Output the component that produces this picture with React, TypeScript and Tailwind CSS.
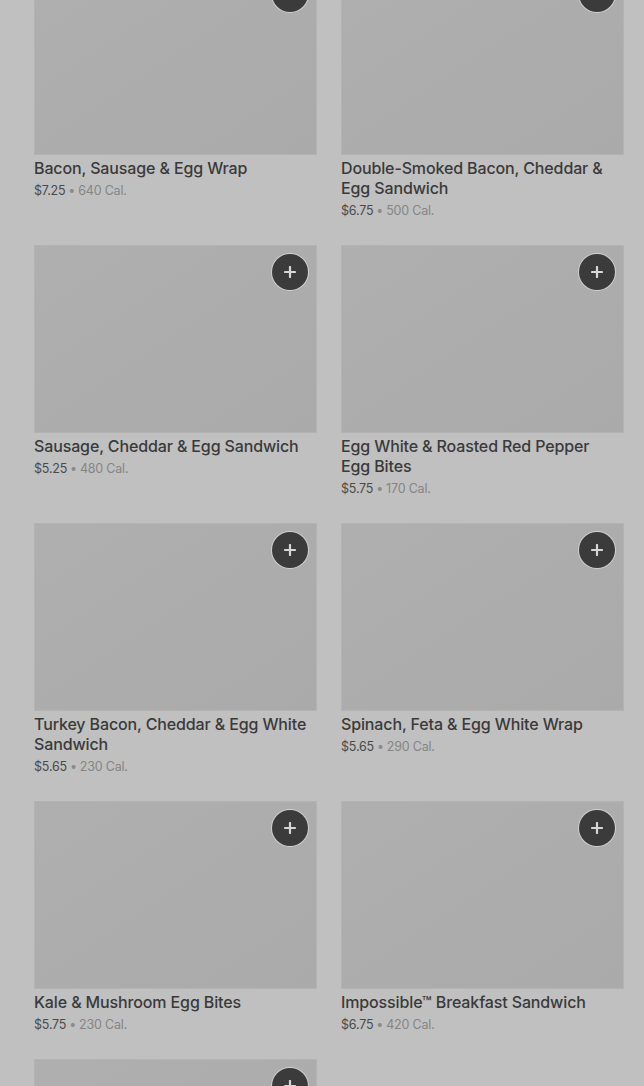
import React from "react";

type Item = { name: string; price: string; cal: string };

const items: Item[] = [
  { name: "Bacon, Sausage & Egg Wrap", price: "$7.25", cal: "640 Cal." },
  { name: "Double-Smoked Bacon, Cheddar & Egg Sandwich", price: "$6.75", cal: "500 Cal." },
  { name: "Sausage, Cheddar & Egg Sandwich", price: "$5.25", cal: "480 Cal." },
  { name: "Egg White & Roasted Red Pepper Egg Bites", price: "$5.75", cal: "170 Cal." },
  { name: "Turkey Bacon, Cheddar & Egg White Sandwich", price: "$5.65", cal: "230 Cal." },
  { name: "Spinach, Feta & Egg White Wrap", price: "$5.65", cal: "290 Cal." },
  { name: "Kale & Mushroom Egg Bites", price: "$5.75", cal: "230 Cal." },
  { name: "Impossible™ Breakfast Sandwich", price: "$6.75", cal: "420 Cal." },
  { name: "Classic Egg Sandwich", price: "$4.95", cal: "360 Cal." },
];

function AddButton() {
  return (
    <button
      type="button"
      aria-label="Add"
      className="absolute right-[8px] top-[8px] grid h-[36px] w-[36px] place-items-center rounded-full bg-[#3b3b3b] ring-1 ring-[#d0d0d0]"
    >
      <svg width="12" height="12" viewBox="0 0 12 12" fill="none">
        <path d="M6 1v10M1 6h10" stroke="#d6d6d6" strokeWidth="2.2" strokeLinecap="round" />
      </svg>
    </button>
  );
}

function ProductCard({ item }: { item: Item }) {
  return (
    <div className="flex flex-col">
      <div className="relative h-[188px] w-full border border-[#b3b3b3] bg-gradient-to-br from-[#afafaf] to-[#aaaaaa]">
        <AddButton />
      </div>
      <p className="mt-[3px] pr-[8px] text-[16px] font-medium leading-[20px] tracking-[-0.13px] text-[#3a3a3a]">
        {item.name}
      </p>
      <p className="mt-[4px] text-[12.5px] leading-[18px] tracking-[-0.2px] text-[#4a4a4a]">
        {item.price}
        <span className="mx-[3px] text-[#8a8a8a]">•</span>
        <span className="text-[#858585]">{item.cal}</span>
      </p>
    </div>
  );
}

export default function App() {
  return (
    <main
      className="h-[1086px] overflow-hidden bg-[#c0c0c0]"
      style={{ fontFamily: "Inter, 'Noto Sans', Roboto, sans-serif" }}
    >
      <div className="-mt-[33px] grid grid-cols-2 gap-x-[24px] gap-y-[25px] pl-[34px] pr-[20px]">
        {items.map((it) => (
          <ProductCard key={it.name} item={it} />
        ))}
      </div>
    </main>
  );
}
